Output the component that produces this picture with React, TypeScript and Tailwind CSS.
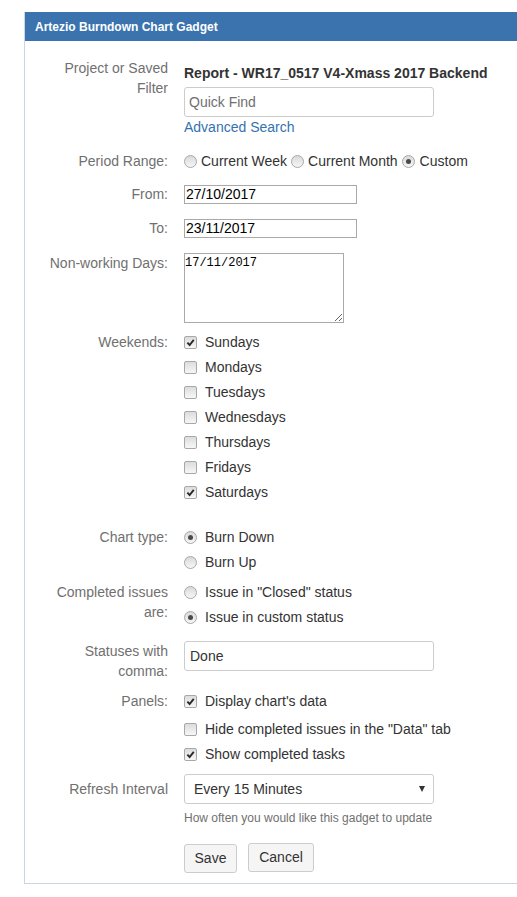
import type { ReactNode } from 'react';

const font = { fontFamily: '"Liberation Sans", Arial, sans-serif' };

function Label({ children, className = '' }: { children: ReactNode; className?: string }) {
  return (
    <div className={`w-[143px] shrink-0 text-right text-[14px] text-[#707070] ${className}`}>
      {children}
    </div>
  );
}

function Radio({ checked = false }: { checked?: boolean }) {
  return (
    <span className="flex h-[13px] w-[13px] shrink-0 items-center justify-center rounded-full border border-[#a8a8a8] bg-linear-to-b from-[#d9d9d9] to-[#f7f7f7]">
      {checked ? <span className="h-[5px] w-[5px] rounded-full bg-[#4a4a4a]" /> : null}
    </span>
  );
}

function Check({ checked = false }: { checked?: boolean }) {
  return (
    <span className="flex h-[13px] w-[13px] shrink-0 items-center justify-center rounded-[2px] border border-[#a8a8a8] bg-linear-to-b from-[#dcdcdc] to-[#f7f7f7]">
      {checked ? (
        <svg viewBox="0 0 10 10" className="h-[9px] w-[9px]">
          <path d="M1.5 5.2 L4 7.8 L8.6 2" fill="none" stroke="#2a2a2a" strokeWidth="2.1" />
        </svg>
      ) : null}
    </span>
  );
}

function Option({ children, checked, kind }: { children: ReactNode; checked?: boolean; kind: 'radio' | 'check' }) {
  return (
    <div className="flex h-[25px] items-center gap-2 text-[14px] text-[#333]">
      {kind === 'radio' ? <Radio checked={checked} /> : <Check checked={checked} />}
      <span>{children}</span>
    </div>
  );
}

export default function App() {
  const weekends: [string, boolean][] = [
    ['Sundays', true],
    ['Mondays', false],
    ['Tuesdays', false],
    ['Wednesdays', false],
    ['Thursdays', false],
    ['Fridays', false],
    ['Saturdays', true],
  ];

  return (
    <div className="h-[897px] w-full overflow-hidden bg-white pl-6 pt-3" style={font}>
      <div className="w-[510px] border-b border-l border-[#ccd6e2]">
        <div className="flex h-[29px] items-center bg-[#3b73af] pl-[10px] text-[12px] font-bold text-white">
          Artezio Burndown Chart Gadget
        </div>

        <div className="pb-[10px] pt-[17px]">
          {/* project / filter */}
          <div className="flex gap-4">
            <Label className="leading-5">
              Project or Saved
              <br />
              Filter
            </Label>
            <div className="flex flex-col pt-[5px]">
              <div className="text-[14px] font-bold leading-5 text-[#333]">
                Report - WR17_0517 V4-Xmass 2017 Backend
              </div>
              <div className="mt-1 flex h-[30px] w-[250px] items-center rounded-[3px] border border-[#ccc] pl-1 text-[14px] text-[#707070]">
                Quick Find
              </div>
              <div className="text-[14px] leading-5 text-[#3572b0]">Advanced Search</div>
            </div>
          </div>

          {/* period */}
          <div className="mt-[14px] flex gap-4">
            <Label className="leading-5">Period Range:</Label>
            <div className="flex h-5 items-center text-[14px] text-[#333]">
              <Radio />
              <span className="ml-1">Current Week</span>
              <span className="ml-1">
                <Radio />
              </span>
              <span className="ml-1">Current Month</span>
              <span className="ml-1">
                <Radio checked />
              </span>
              <span className="ml-[5px]">Custom</span>
            </div>
          </div>

          {/* from */}
          <div className="mt-[14px] flex gap-4">
            <Label className="leading-[19px]">From:</Label>
            <div className="flex h-[19px] w-[173px] items-center border border-[#a9a9a9] pl-px text-[14px] text-black">
              27/10/2017
            </div>
          </div>

          {/* to */}
          <div className="mt-[15px] flex gap-4">
            <Label className="leading-[19px]">To:</Label>
            <div className="flex h-[19px] w-[173px] items-center border border-[#a9a9a9] pl-px text-[14px] text-black">
              23/11/2017
            </div>
          </div>

          {/* non-working */}
          <div className="mt-[15px] flex gap-4">
            <Label className="leading-5">Non-working Days:</Label>
            <textarea
              readOnly
              defaultValue="17/11/2017"
              className="h-[70px] w-[160px] resize border border-[#a9a9a9] px-0 pt-[2px] text-[12px] leading-[14px] text-black outline-none"
              style={{ fontFamily: '"Liberation Mono", "Courier New", monospace' }}
            />
          </div>

          {/* weekends */}
          <div className="mt-[7px] flex gap-4">
            <Label className="leading-[25px]">Weekends:</Label>
            <div className="flex flex-col">
              {weekends.map(([d, c]) => (
                <Option key={d} kind="check" checked={c}>
                  {d}
                </Option>
              ))}
            </div>
          </div>

          {/* chart type */}
          <div className="mt-5 flex gap-4">
            <Label className="leading-[25px]">Chart type:</Label>
            <div className="flex flex-col">
              <Option kind="radio" checked>
                Burn Down
              </Option>
              <Option kind="radio">Burn Up</Option>
            </div>
          </div>

          {/* completed */}
          <div className="mt-[5px] flex gap-4">
            <Label className="pt-[2px] leading-5">
              Completed issues
              <br />
              are:
            </Label>
            <div className="flex flex-col">
              <Option kind="radio">Issue in "Closed" status</Option>
              <Option kind="radio" checked>
                Issue in custom status
              </Option>
            </div>
          </div>

          {/* statuses */}
          <div className="mt-[11px] flex gap-4">
            <Label className="leading-5">
              Statuses with
              <br />
              comma:
            </Label>
            <div className="flex h-[30px] w-[250px] items-center rounded-[3px] border border-[#ccc] pl-[5px] text-[14px] text-[#333]">
              Done
            </div>
          </div>

          {/* panels */}
          <div className="mt-2 flex gap-4">
            <Label className="leading-[25px]">Panels:</Label>
            <div className="flex flex-col">
              <Option kind="check" checked>
                Display chart's data
              </Option>
              <div className="mt-[3px]">
                <Option kind="check">Hide completed issues in the "Data" tab</Option>
              </div>
              <Option kind="check" checked>
                Show completed tasks
              </Option>
            </div>
          </div>

          {/* refresh */}
          <div className="mt-[7px] flex gap-4">
            <Label className="leading-[30px]">Refresh Interval</Label>
            <div className="flex flex-col">
              <div className="flex h-[30px] w-[250px] items-center justify-between rounded-[3px] border border-[#ccc] pl-[9px] pr-[8px] text-[14px] text-[#333]">
                <span>Every 15 Minutes</span>
                <svg viewBox="0 0 6 6" className="h-[6px] w-[6px]">
                  <path d="M0 0 H6 L3 6 Z" fill="#333" />
                </svg>
              </div>
              <div className="mt-[6px] text-[12px] leading-4 text-[#707070]">
                How often you would like this gadget to update
              </div>
            </div>
          </div>

          {/* buttons */}
          <div className="mt-[17px] flex gap-4">
            <div className="w-[143px] shrink-0" />
            <div className="flex items-start gap-[11px]">
              <div className="mt-px flex h-[29px] w-[53px] items-center justify-center rounded-[3px] border border-[#ccc] bg-[#f5f5f5] text-[14px] text-[#333]">
                Save
              </div>
              <div className="flex h-[29px] w-[66px] items-center justify-center rounded-[3px] border border-[#ccc] bg-[#f5f5f5] text-[14px] text-[#333]">
                Cancel
              </div>
            </div>
          </div>
        </div>
      </div>
    </div>
  );
}
